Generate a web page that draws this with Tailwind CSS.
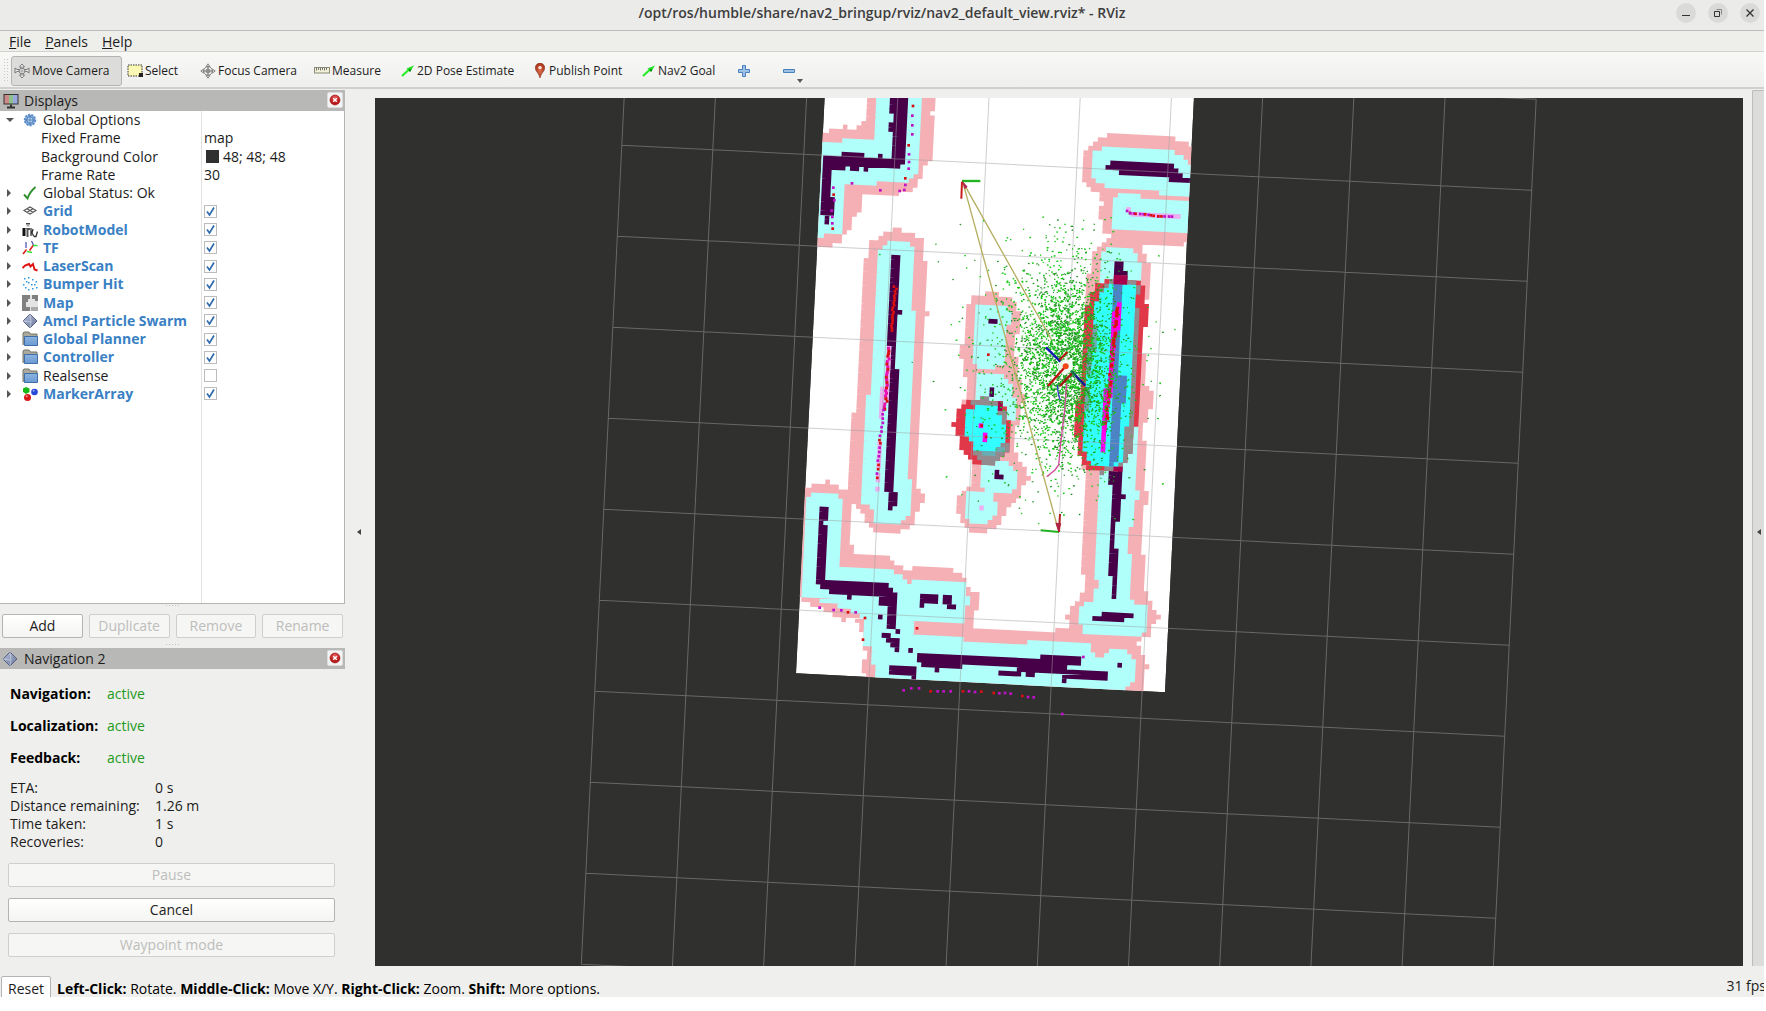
<!DOCTYPE html>
<html lang="en">
<head>
<meta charset="utf-8">
<title>RViz</title>
<script src="https://cdn.jsdelivr.net/npm/@tailwindcss/browser@4"></script>
</head>
<body class="flex h-screen flex-col overflow-hidden bg-white pb-3.5 pr-0.5 font-['Open_Sans','Noto_Sans',sans-serif] text-[14px] leading-[18px] text-[#1c1c1c]">

<svg class="absolute size-0" aria-hidden="true">
  <defs>
    <linearGradient id="folderG" x1="0" y1="0" x2="0" y2="1"><stop offset="0" stop-color="#8db4e0"/><stop offset="1" stop-color="#6a9ad2"/></linearGradient>
    <linearGradient id="diaG" x1="0" y1="0" x2="1" y2="1"><stop offset="0" stop-color="#b9c3da"/><stop offset="1" stop-color="#66759b"/></linearGradient>
    <radialGradient id="pinG"><stop offset="0" stop-color="#e07050"/><stop offset="1" stop-color="#a83418"/></radialGradient>
    <radialGradient id="redG" cy="0.3"><stop offset="0" stop-color="#ee6666"/><stop offset="1" stop-color="#b81818"/></radialGradient>
    <symbol id="i-move" viewBox="0 0 16 16"><g fill="#fff" stroke="#777" stroke-width="1"><path d="M8 1 10.500 4H9v8h1.500L8 15l-2.500-3H7V4H5.500z"/><path d="M1 5v5l2-1.500h10L15 10V5l-2 1.500H3z" fill="#eee"/><circle cx="8" cy="8" r="2.800"/></g><path d="M8 3v10M4 8h8" stroke="#999"/></symbol>
    <symbol id="i-focus" viewBox="0 0 16 16"><g fill="#ddd" stroke="#888"><path d="M8 .8 10 3.500H6zM8 15.200l2-2.700H6zM.8 8l2.700-2v4zM15.200 8l-2.700-2v4z"/><circle cx="8" cy="8" r="4.300" fill="#eee"/><circle cx="8" cy="8" r="2"/></g><path d="M8 3v10M3 8h10" stroke="#777"/></symbol>
    <symbol id="i-select" viewBox="0 0 16 13"><rect x="1" y="1" width="14" height="11" fill="#fbf8b4" stroke="#333" stroke-dasharray="1.500 1"/><path d="M12 9h4v4h-4z" fill="#222"/></symbol>
    <symbol id="i-measure" viewBox="0 0 16 7"><rect x=".5" y=".5" width="15" height="5.500" fill="#f2f0d8" stroke="#8a8a78"/><path d="M2.500 1v2.500M4.500 1v2M6.500 1v2.500M8.500 1v2M10.500 1v2.500M12.500 1v2" stroke="#777"/></symbol>
    <symbol id="i-arrow" viewBox="0 0 14 12"><path d="M1 11 7.500 5" stroke="#27ee27" stroke-width="2.200"/><path d="M13 .5 5.500 3.500 9 7z" fill="#1fe01f"/><path d="M8 5l2 .5" stroke="#0b8a0b" stroke-width="2"/></symbol>
    <symbol id="i-pin" viewBox="0 0 10 15"><path d="M5 15C4 10 .3 8.500.3 4.800a4.700 4.700 0 0 1 9.400 0C9.700 8.500 6 10 5 15z" fill="url(#pinG)" stroke="#8c3020" stroke-width=".6"/><circle cx="5" cy="4.600" r="1.700" fill="#f6e6e0"/></symbol>
    <symbol id="i-plus" viewBox="0 0 12 12"><path d="M4.500.5h3v4h4v3h-4v4h-3v-4h-4v-3h4z" fill="#9cc0e6" stroke="#4a80bc"/></symbol>
    <symbol id="i-minus" viewBox="0 0 12 12"><path d="M.5 4.500h11v3H.5z" fill="#9cc0e6" stroke="#4a80bc"/></symbol>
    <symbol id="i-monitor" viewBox="0 0 16 16"><path d="M.5 1h15v10.500H.5z" fill="#333"/><path d="M1.500 2h4.500v8.500H1.500z" fill="#c88"/><path d="M6 2h4v8.500H6z" fill="#8dc08a"/><path d="M10 2h4.500v8.500H10z" fill="#99a8de"/><path d="M7 11.500h2v2h3v2H4v-2h3z" fill="#333"/></symbol>
    <symbol id="i-diamond" viewBox="0 0 16 16"><path d="M8 1 15 8 8 15 1 8z" fill="url(#diaG)" stroke="#55617f"/><path d="M8 1 9 9 8 15M1 8l8 1" stroke="#d8def0" stroke-width=".6" fill="none"/></symbol>
    <symbol id="i-close" viewBox="0 0 12 12"><circle cx="6" cy="6" r="5" fill="url(#redG)" stroke="#9c1616" stroke-width=".6"/><path d="M4.200 4.200l3.600 3.600M7.800 4.200 4.200 7.800" stroke="#fff" stroke-width="1.400"/></symbol>
    <symbol id="i-gear" viewBox="0 0 16 16"><circle cx="8" cy="8" r="5.300" fill="#8fb5e2" stroke="#5b8bc8" stroke-width="1.800" stroke-dasharray="2.200 1"/><circle cx="8" cy="8" r="3.300" fill="#b9d2ef" stroke="#4678b8"/><path d="M8 3v10M3 8h10" stroke="#4678b8" stroke-width=".8"/></symbol>
    <symbol id="i-ok" viewBox="0 0 16 16"><path d="M2 9.500 5.500 13.500C7 9 10 5 13.500 2" fill="none" stroke="#2f8f2f" stroke-width="1.900"/></symbol>
    <symbol id="i-grid" viewBox="0 0 16 16"><path d="M2 7.500 8 4l6 3.500L8 11zM5 5.800l6 3.500M11 5.800 5 9.300" fill="none" stroke="#555" stroke-width="1.100"/></symbol>
    <symbol id="i-robot" viewBox="0 0 16 16"><path d="M4 1h4v1.500H4z" fill="#444"/><path d="M4.500 3h3v1.500h-3z" fill="#aaa"/><path d="M.5 6h3v8h-3z" fill="#111"/><path d="M4 6h4v2H6.500v7H4.500V8z" fill="#555"/><path d="M9 6v8M11 7l-1 4 2 3.500M12 14.500h2l1.500-5" stroke="#333" stroke-width="1.300" fill="none"/></symbol>
    <symbol id="i-tf" viewBox="0 0 16 16"><path d="M4 2v6M9.500 1l2 4" stroke="#4a4ab0" stroke-width="1.200"/><path d="M1 14 4.500 9.500M7.500 10.500l4-5.500" stroke="#e02020" stroke-width="1.600"/><path d="M5 11.500l5 1M11 5.500h4.500" stroke="#35e035" stroke-width="1.600"/></symbol>
    <symbol id="i-laser" viewBox="0 0 16 16"><path d="M.5 10 3 7.500 7 6l1.500 2.500L11 6l1.500 5.500 3 1" fill="none" stroke="#e01010" stroke-width="1.900"/></symbol>
    <symbol id="i-bump" viewBox="0 0 16 16"><path d="M2 2h1.500v1.500H2zM6 1h1.500v1.500H6zM4 5h1.500v1.500H4zM1 8h1.500v1.500H1zM6 6h1.500v1.500H6zM10 3h1.500v1.500H10zM13.500 5H15v1.500h-1.500zM9 8h1.500v1.500H9zM12 8h1.500v1.500H12zM6 13h1.500v1.500H6zM10 12h1.500v1.500H10zM14 11h1.500v1.500H14zM3 11h1.500v1.500H3z" fill="#2a9ae8"/></symbol>
    <symbol id="i-map" viewBox="0 0 16 16"><path d="M0 0h16v16H0z" fill="#e4e4e4"/><path d="M0 0h8v4H6v3H4v9H0zM10 0h6v6h-3V4h-3zM4 12h4v4H4z" fill="#808080"/><path d="M9 12h7v4H9z" fill="#aaa"/></symbol>
    <symbol id="i-folder" viewBox="0 0 16 16"><path d="M1 14V2l1-1h5l1.500 2H15v3" fill="#aaa99c" stroke="#77766c"/><path d="M2.500 5.500h13v9h-13z" fill="url(#folderG)" stroke="#3f6da8"/></symbol>
    <symbol id="i-marker" viewBox="0 0 16 16"><path d="M1 2.500 4 1l3.500 1.500V6L4 8 1 6z" fill="#18b818"/><circle cx="12.500" cy="6" r="3.300" fill="#2848d8"/><circle cx="5.500" cy="11.500" r="3.500" fill="#d81818"/><circle cx="4.700" cy="10.200" r="1" fill="#f79090"/><circle cx="11.700" cy="4.800" r="1" fill="#93a6f5"/></symbol>
  </defs>
</svg>

<header class="grid h-[31px] shrink-0 grid-cols-[1fr_auto_1fr] items-center border-b border-[#bdbdbd] bg-[#ebebea] pb-1">
  <h1 class="col-start-2 text-[14px] font-semibold text-[#3d3d3d]">/opt/ros/humble/share/nav2_bringup/rviz/nav2_default_view.rviz* - RViz</h1>
  <div class="flex justify-end gap-3 pr-1">
    <button aria-label="Minimize" class="size-5 rounded-full bg-[#dadad9]"><svg viewBox="0 0 20 20"><path d="M6 12.500h8" stroke="#333"/></svg></button>
    <button aria-label="Restore" class="size-5 rounded-full bg-[#dadad9]"><svg viewBox="0 0 20 20" fill="none" stroke="#333"><path d="M6.500 8.500h5v5h-5z"/><path d="M8.500 6.500h5v5" stroke="#888"/></svg></button>
    <button aria-label="Close" class="size-5 rounded-full bg-[#dadad9]"><svg viewBox="0 0 20 20"><path d="M6.500 6.500l7 7M13.500 6.500l-7 7" stroke="#333" stroke-width="1.300"/></svg></button>
  </div>
</header>

<nav class="flex h-[21px] shrink-0 items-center gap-3.5 border-b border-[#d2d2d0] bg-[#eeeeeb] pl-[9px] pt-0.5">
  <button><u>F</u>ile</button>
  <button><u>P</u>anels</button>
  <button><u>H</u>elp</button>
</nav>

<div class="flex h-[37px] shrink-0 items-center gap-0.5 border-b-2 border-[#d0d0ce] bg-linear-to-b from-[#f8f8f6] to-[#efefed] pt-0.5 text-[12px] whitespace-nowrap">
  <div class="ml-[3px] mr-px h-[25px] w-[5px] bg-[radial-gradient(#c8c8c8_1px,transparent_1px)] bg-size-[3px_3px]"></div>
  <button class="flex h-[30px] w-[111px] items-center gap-0.5 rounded-[3px] border border-[#b4b4b2] bg-[#dcdcda] pl-0.5"><svg class="size-4"><use href="#i-move"/></svg>Move Camera</button>
  <button class="flex h-[30px] w-[74px] items-center gap-0.5 pl-[3px]"><svg class="h-[13px] w-4"><use href="#i-select"/></svg>Select</button>
  <button class="flex h-[30px] w-[112px] items-center gap-0.5"><svg class="size-4"><use href="#i-focus"/></svg>Focus Camera</button>
  <button class="flex h-[30px] w-[85px] items-center gap-0.5"><svg class="h-[7px] w-4"><use href="#i-measure"/></svg>Measure</button>
  <button class="flex h-[30px] w-[132px] items-center gap-0.5"><svg class="h-3 w-3.5"><use href="#i-arrow"/></svg>2D Pose Estimate</button>
  <button class="flex h-[30px] w-[105px] items-center gap-1"><svg class="h-[15px] w-2.5"><use href="#i-pin"/></svg>Publish Point</button>
  <button class="flex h-[30px] w-[94px] items-center gap-0.5"><svg class="h-3 w-3.5"><use href="#i-arrow"/></svg>Nav2 Goal</button>
  <button aria-label="Add tool" class="flex h-[30px] w-[43px] items-center"><svg class="size-3"><use href="#i-plus"/></svg></button>
  <button aria-label="Remove tool" class="flex h-[30px] items-center"><svg class="size-3"><use href="#i-minus"/></svg><svg class="ml-0.5 mt-5 h-1 w-1.5" viewBox="0 0 6 4"><path d="M0 0h6L3 4z" fill="#555"/></svg></button>
</div>

<main class="flex min-h-0 flex-1 bg-[#efefed]">
  <aside class="flex w-[345px] shrink-0 flex-col pt-px">
    <div class="flex h-[21px] shrink-0 items-center bg-[#b8b8b6] pl-[3px] pr-0.5">
      <svg class="size-4"><use href="#i-monitor"/></svg><h2 class="ml-[5px] flex-1">Displays</h2>
      <button aria-label="Close Displays" class="mb-0.5 flex size-4 items-center justify-center rounded-xs border border-[#ddd] bg-[#f4f4f4]"><svg class="size-3"><use href="#i-close"/></svg></button>
    </div>
    <div class="flex min-h-0 flex-1 border-b border-r border-[#b4b4b2] bg-[linear-gradient(90deg,transparent_201px,#e2e2e2_201px,#e2e2e2_202px,transparent_202px)] bg-white">
      <div id="tree" role="tree" class="grid h-[292px] w-full grid-rows-16"></div>
    </div>
    <div class="mx-auto h-2 w-4 shrink-0 border-b-0 bg-[radial-gradient(#c0c0c0_1px,transparent_1px)] bg-size-[3px_3px] bg-repeat-x"></div>
    <div class="flex shrink-0 gap-1.5 px-0.5 pt-0.5">
      <button class="h-6 flex-1 rounded-xs border border-[#b4b4b2] bg-linear-to-b from-white to-[#f4f4f2]">Add</button>
      <button disabled class="h-6 flex-1 rounded-xs border border-[#cfcfcd] bg-[#f6f6f4] text-[#bdbdbb]">Duplicate</button>
      <button disabled class="h-6 flex-1 rounded-xs border border-[#cfcfcd] bg-[#f6f6f4] text-[#bdbdbb]">Remove</button>
      <button disabled class="h-6 flex-1 rounded-xs border border-[#cfcfcd] bg-[#f6f6f4] text-[#bdbdbb]">Rename</button>
    </div>
    <div class="mx-auto mt-[5px] h-[5px] w-4 shrink-0 bg-[radial-gradient(#c0c0c0_1px,transparent_1px)] bg-size-[3px_3px] bg-repeat-x"></div>
    <div class="flex h-[21px] shrink-0 items-center bg-[#b8b8b6] pl-0.5 pr-0.5">
      <svg class="size-4"><use href="#i-diamond"/></svg><h2 class="ml-1.5 flex-1">Navigation 2</h2>
      <button aria-label="Close Navigation 2" class="mb-0.5 flex size-4 items-center justify-center rounded-xs border border-[#ddd] bg-[#f4f4f4]"><svg class="size-3"><use href="#i-close"/></svg></button>
    </div>
    <div class="shrink-0 px-2.5 pt-4">
      <dl class="grid grid-cols-[97px_1fr] gap-y-3.5 text-[#1e9a1e]">
        <dt class="font-bold text-black">Navigation:</dt><dd>active</dd>
        <dt class="font-bold text-black">Localization:</dt><dd>active</dd>
        <dt class="font-bold text-black">Feedback:</dt><dd>active</dd>
      </dl>
      <dl class="mt-3 grid grid-cols-[145px_1fr]">
        <dt>ETA:</dt><dd>0 s</dd>
        <dt>Distance remaining:</dt><dd>1.26 m</dd>
        <dt>Time taken:</dt><dd>1 s</dd>
        <dt>Recoveries:</dt><dd>0</dd>
      </dl>
    </div>
    <div class="flex shrink-0 flex-col gap-[11px] pb-[9px] pl-2 pr-2.5 pt-3">
      <button disabled class="h-6 rounded-xs border border-[#cfcfcd] bg-[#f6f6f4] text-[#bdbdbb]">Pause</button>
      <button class="h-6 rounded-xs border border-[#b4b4b2] bg-linear-to-b from-white to-[#f4f4f2]">Cancel</button>
      <button disabled class="h-6 rounded-xs border border-[#cfcfcd] bg-[#f6f6f4] text-[#bdbdbb]">Waypoint mode</button>
    </div>
  </aside>
  <button aria-label="Hide left dock" class="flex w-[30px] shrink-0 items-center justify-center pr-0.5 pt-2"><svg class="h-1.5 w-1" viewBox="0 0 4 6"><path d="M4 0v6L0 3z" fill="#444"/></svg></button>
  <section class="min-w-0 flex-1 bg-[#30302f] mt-[9px]">
    <svg id="scene" class="block size-full" viewBox="375 98 1368 868" preserveAspectRatio="xMidYMin slice">
      <defs><clipPath id="mapClip"><path d="M106-20 18 1750l1107 57L1214-20z"/></clipPath></defs>
      <g transform="translate(790 90) scale(.33333)">
        <g id="costmap" clip-path="url(#mapClip)"><path d="M106-20 18 1750l1107 57L1214-20z" fill="#fefffe"/></g>
      </g>
      <path id="grid" fill="none" stroke="#a0a0a4" stroke-opacity=".5" transform="translate(626.300 54.300) rotate(2.830)"/>
      <g id="overlay" transform="translate(790 90) scale(.33333)" fill="none"></g>
    </svg>
  </section>
  <button aria-label="Show right dock" class="ml-[9px] mt-px mb-[-7px] flex w-3 shrink-0 items-center justify-center rounded-l-xs border-l border-t border-b border-[#bcbcba] bg-[#dcdcda]"><svg class="h-1.5 w-1" viewBox="0 0 4 6"><path d="M4 0v6L0 3z" fill="#444"/></svg></button>
</main>

<footer class="flex h-[31px] shrink-0 items-center overflow-hidden bg-[#efefed] pl-px whitespace-nowrap">
  <button class="mt-4 h-7 w-[50px] shrink-0 rounded-xs border border-[#b4b4b2] bg-white pb-0.5">Reset</button>
  <p class="ml-1.5 mt-3.5 flex-1 text-black"><b>Left-Click:</b> Rotate. <b>Middle-Click:</b> Move X/Y. <b>Right-Click:</b> Zoom. <b>Shift:</b> More options.</p>
  <span class="-mr-0.5 mt-2">31 fps</span>
</footer>

<script>
// ---- display tree: [icon, label, kind, value] ----
const rows = [
  ['gear','Global Options','open'], ['', 'Fixed Frame','prop','map'], ['', 'Background Color','color','48; 48; 48'], ['', 'Frame Rate','prop','30'],
  ['ok','Global Status: Ok','closed'], ['grid','Grid','on'], ['robot','RobotModel','on'], ['tf','TF','on'], ['laser','LaserScan','on'],
  ['bump','Bumper Hit','on'], ['map','Map','on'], ['diamond','Amcl Particle Swarm','on'], ['folder','Global Planner','on'],
  ['folder','Controller','on'], ['folder','Realsense','off'], ['marker','MarkerArray','on']];
document.getElementById('tree').innerHTML = rows.map(([icon, label, kind, value], i) => {
  const check = kind === 'on' || kind === 'off';
  const arrow = icon ? (kind === 'open' ? '<path d="M0 2h8L4 6z" fill="#555"/>' : '<path d="M1 0v8l4-4z" fill="#555"/>') : '';
  const name = icon
    ? `<svg class="mr-2 size-2 shrink-0" viewBox="0 0 8 8">${arrow}</svg><svg class="mr-[5px] size-4 shrink-0"><use href="#i-${icon}"/></svg>`
    : '';
  let right = '';
  if (check) right = `<input id="d${i}" type="checkbox" ${kind === 'on' ? 'checked' : ''} class="peer col-start-1 row-start-1 ml-0.5 size-[13px] appearance-none border border-[#bcbcbc] bg-white"><svg class="pointer-events-none col-start-1 row-start-1 ml-0.5 hidden size-[13px] peer-checked:block" viewBox="0 0 13 13"><path d="M3 6.500 5.500 10 10 2.500" fill="none" stroke="#2f6aac" stroke-width="1.700"/></svg>`;
  else if (kind === 'color') right = `<span class="flex items-center gap-1 pl-1"><span class="size-[13px] bg-[#303030]"></span>${value}</span>`;
  else if (value) right = `<span class="pl-0.5">${value}</span>`;
  const tone = kind === 'on' ? 'font-bold text-[#3a80c4]' : '';
  const cell = `class="flex items-center ${icon ? 'pl-1.5' : 'pl-[41px]'} ${tone}"`;
  return `<div role="treeitem" class="grid grid-cols-[202px_1fr] items-center whitespace-nowrap">${check ? `<label for="d${i}" ${cell}>${name}${label}</label>` : `<span ${cell}>${name}${label}</span>`}<div class="grid items-center">${right}</div></div>`;
}).join('');

// ---- ground grid: 10 x 10 cells ----
const STEP = 91.1;
let g = '';
for (let i = 0; i <= 10; i++) g += `M0 ${i*STEP}H${10*STEP}M${i*STEP} 0V${10*STEP}`;
document.getElementById('grid').setAttribute('d', g);

// ---- costmap: outlines are rasterised onto rotated map cells ----
const A = 2.83 * Math.PI / 180, CELL = 13.67, ca = Math.cos(A), sa = Math.sin(A);
const costmap = document.getElementById('costmap'), overlay = document.getElementById('overlay');
function add(parent, tag, attrs) {
  const e = document.createElementNS('http://www.w3.org/2000/svg', tag);
  for (const k in attrs) e.setAttribute(k, attrs[k]);
  parent.appendChild(e);
}
function cells(fill, list, opacity = 1) {
  let d = '';
  for (const s of list) {
    const n = s.trim().split(/[\s,]+/).map(Number), p = [];
    for (let i = 0; i < n.length; i += 2) p.push([(n[i]*ca + n[i+1]*sa)/CELL, (-n[i]*sa + n[i+1]*ca)/CELL]);
    const ys = p.map(q => q[1]);
    for (let r = Math.floor(Math.min(...ys)); r <= Math.max(...ys); r++) {
      const y = r + .5, xs = [];
      p.forEach((a, i) => { const b = p[(i+1) % p.length];
        if ((a[1] <= y) !== (b[1] <= y)) xs.push(a[0] + (y-a[1])*(b[0]-a[0])/(b[1]-a[1])); });
      xs.sort((a, b) => a - b);
      for (let i = 0; i + 1 < xs.length; i += 2) {
        const x0 = Math.round(xs[i]), x1 = Math.round(xs[i+1]);
        if (x1 > x0) d += `M${x0} ${r}H${x1}V${r+1.06}H${x0}z`;
      }
    }
  }
  add(costmap, 'path', { d, fill, 'fill-opacity': opacity, transform: `rotate(2.83) scale(${CELL})` });
}
cells('#f5b0b5', [
  '230,10 435,10 434,64 420,68 432,80 425,215 405,225 400,255 365,300 330,310 215,315 213,365 195,375 180,415 150,455 110,475 70,465 85,128 150,118 165,105 180,118 210,105 228,95 220,80 230,64',
  '320,412 345,425 395,445 397,500 408,510 404,660 415,670 402,680 398,800 402,850 390,1040 385,1200 400,1210 398,1240 385,1260 370,1300 330,1325 290,1335 240,1315 225,1280 205,1255 170,1210 178,1110 190,1000 186,970 198,960 205,800 215,620 225,520 240,460 275,430',
  '550,622 605,607 660,622 685,650 692,700 678,740 678,800 685,850 702,920 690,1000 670,1030 680,1100 705,1130 717,1165 703,1185 690,1215 655,1250 650,1265 620,1310 570,1335 520,1310 497,1250 505,1215 525,1200 540,1180 545,1100 520,1060 490,1000 520,935 530,900 520,830 510,790 515,770 530,700 520,685 530,645',
  '975,130 1135,140 1178,155 1215,175 1205,455 1165,465 1055,462 1070,510 1088,550 1085,600 1065,640 1068,700 1060,780 1070,830 1070,890 1085,905 1083,950 1065,1000 1062,1110 1070,1210 1082,1225 1070,1235 1060,1290 1055,1380 1062,1400 1058,1490 1070,1510 1092,1540 1095,1575 1108,1580 1092,1600 1085,1630 1060,1645 1035,1655 835,1635 835,1595 820,1580 835,1575 840,1550 870,1520 885,1480 875,1440 880,1290 885,1160 860,1070 855,970 880,840 885,680 888,600 898,540 905,490 920,470 960,440 940,420 928,370 935,345 935,305 895,295 875,265 875,230 880,200 895,165 935,145',
  '38,1195 110,1172 155,1195 180,1215 188,1280 185,1390 290,1400 350,1440 395,1430 480,1435 520,1450 535,1490 562,1510 575,1545 560,1560 550,1610 690,1625 780,1625 835,1610 1040,1655 1058,1690 1060,1718 1074,1728 1058,1740 1058,1820 240,1820 228,1755 215,1735 228,1690 210,1610 190,1580 165,1595 80,1550 20,1520']);
cells('#b0fffa', [
  '255,10 392,10 382,245 350,280 165,280 165,380 150,430 70,442 85,155 250,148',
  '280,460 350,455 370,475 365,640 375,680 367,840 362,1000 358,1270 335,1300 260,1300 245,1260 212,1230 225,960 240,900 243,840 250,640 258,490',
  '552,650 650,645 660,660 655,720 640,830 560,835 550,800 555,735',
  '557,855 630,850 665,880 678,940 672,990 640,995 555,925',
  '568,1125 650,1110 675,1140 680,1190 665,1210 600,1210 570,1180',
  '525,1205 615,1200 618,1270 590,1300 535,1300 525,1270',
  '905,190 950,172 1130,178 1175,195 1215,235 1215,320 1110,312 1095,300 960,290 915,278 900,240',
  '980,315 1045,310 1055,325 1215,332 1215,430 975,418 963,395 963,345',
  '930,500 960,472 1035,478 1050,520 1050,640 1040,1000 1035,1110 1045,1220 1028,1270 1020,1340 1018,1530 1067,1545 1063,1630 1030,1638 875,1630 862,1550 915,1525 920,1480 913,1400 922,1160 927,800',
  '60,1212 150,1210 155,1280 148,1425 310,1440 355,1478 410,1468 520,1475 537,1520 525,1595 370,1590 370,1635 435,1640 690,1662 735,1650 895,1660 915,1700 945,1698 955,1675 1015,1680 1032,1710 1028,1770 985,1820 252,1820 250,1685 225,1660 220,1580 150,1550 38,1515 32,1480 45,1260']);
const box = (x, y, w, h) => `${x},${y} ${x+w},${y} ${x+w},${y+h} ${x},${y+h}`;
cells('#470047', [
  '300,10 350,10 350,75 345,210 320,232 230,228 120,240 128,300 128,375 112,400 102,395 102,375 90,370 97,200 180,192 300,203 305,165 298,95 318,88 310,68 298,60',
  box(150,184,16,16), box(262,190,14,14), box(148,228,14,14), box(178,228,24,12), box(220,228,12,14),
  '315,495 327,495 327,655 333,670 318,675 313,780 325,850 320,970 308,1205 318,1210 318,1245 303,1258 290,1255 293,1205 280,1200 290,1040 300,850 298,765 290,745 300,620 302,510',
  box(592,684,28,16), box(594,890,14,28), box(608,935,28,24), '610,1140 622,1140 624,1152 637,1152 637,1167 610,1165',
  '97,1248 112,1250 107,1290 102,1465 145,1472 290,1475 318,1515 312,1610 290,1612 286,1550 265,1535 275,1515 210,1515 180,1525 165,1512 140,1508 115,1505 78,1480 85,1290',
  box(313,1612,14,14), box(262,1570,12,14), '272,1628 300,1632 325,1650 325,1682 298,1670', box(352,1670,14,14),
  '295,1725 385,1730 385,1750 370,1768 358,1755 295,1752',
  '388,1512 442,1515 440,1540 400,1540 398,1552 388,1550', '457,1515 478,1517 492,1530 492,1555 475,1550 455,1538',
  '378,1690 400,1678 405,1690 500,1692 620,1700 715,1707 765,1695 870,1700 868,1722 825,1725 830,1740 960,1745 960,1755 945,1772 865,1765 820,1775 810,1745 715,1755 705,1742 630,1728 500,1730 440,1740 430,1728 395,1726',
  '620,1724 632,1724 632,1742 690,1745 690,1758 620,1752', box(978,1718,14,14),
  '945,225 975,213 1130,220 1160,235 1175,262 1210,266 1210,280 1135,273 1130,262 1020,255 985,250 980,238 945,238',
  '970,530 985,515 998,515 1000,545 1010,545 1010,575 968,575',
  '962,1130 992,1130 990,1210 1005,1218 990,1225 985,1290 972,1300 968,1375 980,1378 978,1440 975,1525 962,1525 963,1455 950,1450 952,1380 960,1270',
  '905,1578 930,1572 932,1565 1000,1566 1028,1570 1028,1584 1000,1590 995,1596 905,1590']);
// rolling local costmap: lethal ring, mixed cells, inflated core
cells('#e03848', [
  '508,960 540,932 580,925 640,935 655,990 662,1040 660,1080 635,1105 590,1128 545,1118 515,1080 500,1030 487,1000',
  '915,590 945,572 1000,562 1045,575 1065,600 1074,660 1060,760 1050,840 1048,920 1030,1080 1000,1130 940,1148 900,1145 870,1100 852,1010 870,900 880,760 888,650']);
cells('#938a8e', [
  '545,935 580,920 635,945 655,990 650,1020 630,1000 600,945 548,945', '545,1080 600,1075 650,1050 662,1075 635,1105 590,1128 560,1100',
  '925,600 960,565 1000,560 1045,580 1050,620 960,590 930,620', '1034,660 1052,640 1040,760 1028,1080 1000,1130 930,1150 950,1120 990,1090 1012,1000']);
cells('#33feff', [
  '530,960 560,950 620,945 640,1000 648,1050 620,1078 565,1085 530,1045 518,1000',
  '928,610 960,583 1035,590 1040,640 1030,720 1022,900 1005,1060 995,1115 960,1135 900,1120 880,1070 890,900 910,700 915,640']);
cells('#6cabb4', ['893,860 918,760 920,700 905,720 890,850 882,960 895,970', '565,1082 620,1078 635,1060 642,1080 590,1105']);
cells('#4c83c4', ['968,580 992,580 992,640 985,740 990,850 1005,860 1000,950 985,1010 980,1120 955,1130 960,1050 962,900 965,740']);
cells('#a9004d', [box(970,552,38,26), box(967,1128,26,18), box(622,940,14,20)]);
cells('#ff00f0', ['978,640 990,640 985,710 975,760 972,860 955,950 944,1080 930,1080 938,960 950,880 955,760 965,690', box(568,1000,14,14), box(582,1028,16,24)]);
cells('#fa9cf0', ['285,770 298,770 300,830 293,900 283,990 268,985 276,900 290,840', box(260,1050,14,85), box(253,1150,12,26), box(252,1186,14,16), box(1005,350,16,20), '1020,368 1170,372 1165,386 1020,380', box(563,1246,14,14)], .8);

// ---- scan points ----
const dot = (x, y, c, s = 6) => add(overlay, 'rect', { x: x - s/2, y: y - s/2, width: s, height: s, fill: c });
const M = '#c010c8', R = '#d81010';
[[369,48,R],[367,77,M],[367,106,M],[367,133,M],[356,166,R],[357,193,M],[357,216,M],[356,236,M],[346,265,R],[346,285,M],[343,300,M],[329,303,M],[271,301,M],[186,280,M],[130,293,M],[131,314,R],[133,331,M],[125,362,M],[127,381,M],[127,400,M],[128,416,R],
 [89,1553,M],[131,1560,M],[154,1561,M],[174,1567,R],[197,1567,M],[225,1584,R],[219,1649,R],[381,1615,R],
 [341,1801,M],[364,1795,M],[387,1795,M],[422,1804,R],[443,1804,M],[461,1804,M],[482,1804,M],[519,1804,R],[537,1804,M],[555,1806,M],[574,1805,R],[611,1809,R],[628,1810,M],[645,1809,M],[662,1811,M],[697,1818,R],[714,1821,M],[731,1822,M],[817,1872,M],[880,1701,M],[595,794,R],[575,1007,R],[588,1041,R]]
 .forEach(([x, y, c]) => dot(x, y, c, 8));
let seed = 11;
const rnd = () => (seed = (seed * 16807) % 2147483647) / 2147483647;
const gauss = () => Math.sqrt(-2 * Math.log(rnd())) * Math.cos(6.28318 * rnd());
function streak(pts, step, colors, s = 8) {
  for (let i = 0; i + 1 < pts.length; i++) {
    const [x0, y0] = pts[i], [x1, y1] = pts[i+1], n = Math.max(1, Math.hypot(x1-x0, y1-y0) / step);
    for (let k = 0; k < n; k++) dot(x0 + (x1-x0)*k/n + gauss()*1.5, y0 + (y1-y0)*k/n, colors[Math.floor(rnd()*colors.length)], s);
  }
}
streak([[318,590],[308,680],[305,725]], 7, [R]);
streak([[296,775],[290,870],[284,960]], 8, [R, '#e810b0'], 9);
streak([[282,960],[270,1060],[261,1165]], 13, [M, M, R]);
streak([[1010,363],[1020,370],[1065,373],[1105,379],[1150,380]], 10, [M, M, R]);
streak([[982,655],[974,730],[965,830],[955,930],[945,1020]], 8, [R, R, '#ff00d0'], 10);

// ---- particle swarm ----
let dark = '', bright = '';
for (let i = 0; i < 3900; i++) {
  const wide = i % 4 === 0;
  const x = (wide ? 800 : 835) + gauss() * (wide ? 135 : 76), y = 825 + gauss() * (wide ? 180 : 142);
  if (y < 370 || y > 1310 || (x > 970 && rnd() < .5) || (x > 1200)) continue;
  const seg = `M${x.toFixed(0)} ${y.toFixed(0)}l${(3+rnd()*3).toFixed(1)} ${(rnd()*5-3).toFixed(1)}`;
  if (rnd() < .4) dark += seg; else bright += seg;
}
add(overlay, 'path', { d: bright, stroke: '#18c818', 'stroke-width': 4 });
add(overlay, 'path', { d: dark, stroke: '#229022', 'stroke-width': 3.500 });

// ---- plans, pose axes and the robot ----
const line = (d, stroke, w = 4) => add(overlay, 'path', { d, stroke, 'stroke-width': w });
line('M518 275 785 750', '#b5ae60'); line('M518 275 805 1320', '#b5ae60');
line('M516 273H571', '#22b422', 7); line('M516 275 514 326', '#c81e1e', 6);
add(overlay, 'path', { d: 'M516 272 533 290 524 298z', fill: '#b02850' });
line('M807 1326 752 1321', '#22b422', 6); line('M810 1272 807 1326', '#b01e1e', 6);
add(overlay, 'path', { d: 'M796 1298 814 1300 806 1328z', fill: '#b02040' });
line('M830 880 824 960 812 1060 806 1125 795 1140 770 1160', '#d04898', 4);
line('M802 885Q804 915 811 930', '#3a3ad0', 4);
line('M768 772 812 816', '#1414b0', 7); line('M832 786 808 810', '#b81414', 6);
add(overlay, 'circle', { cx: 827, cy: 830, r: 22, fill: '#fff', 'fill-opacity': .9 });
line('M823 833 774 888', '#c01414', 7); line('M848 848 810 888', '#a81414', 7);
line('M845 845 886 887', '#1a1a98', 7); line('M842 842 856 858', '#108040', 6);
add(overlay, 'circle', { cx: 827, cy: 829, r: 9, fill: '#f04818' });
</script>
</body>
</html>
